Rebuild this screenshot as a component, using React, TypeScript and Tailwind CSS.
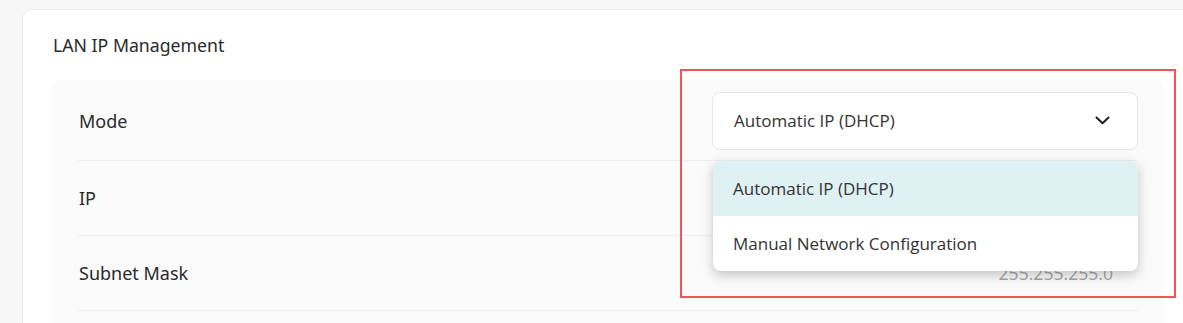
const rows = [
  { label: "Mode", value: null },
  { label: "IP", value: "192.168.1.1" },
  { label: "Subnet Mask", value: "255.255.255.0" },
];

const options = ["Automatic IP (DHCP)", "Manual Network Configuration"];

export default function App() {
  return (
    <div className="relative h-[323px] w-[1183px] overflow-hidden bg-[#f7f7f7] pl-[22px] pt-[9px] font-['Noto_Sans',sans-serif]">
      <section className="h-[440px] w-[1172px] rounded-[10px] border border-[#ececec] bg-white px-[30px] pt-[22px]">
        <h2 className="text-[17.7px] leading-[26px] text-[#2a2a2a]">LAN IP Management</h2>
        <div className="mt-[22px] rounded-[8px] bg-[#fafafa] px-[25px] pb-[40px] pt-[6px]">
          {rows.map((row, i) => (
            <div
              key={row.label}
              className={`flex h-[75px] items-center justify-between border-b border-[#efefef] ${i === 0 ? "pb-[4px]" : ""}`}
            >
              <span className="pl-px text-[18px] text-[#2a2a2a]">{row.label}</span>
              {row.value === null ? (
                <ModeSelect />
              ) : (
                <span className="pr-[25px] font-['Open_Sans',sans-serif] text-[17.6px] text-[#a3a3a3]">
                  {row.value}
                </span>
              )}
            </div>
          ))}
        </div>
      </section>
      {/* annotation box */}
      <div className="pointer-events-none absolute left-[680px] top-[69px] h-[229px] w-[496px] border-2 border-[#f45555]" />
    </div>
  );
}

function ModeSelect() {
  return (
    <div className="relative">
      <button className="flex h-[58px] w-[426px] items-center justify-between rounded-[8px] border border-[#e6e6e6] bg-white pl-[21px] pr-[27px] font-['Open_Sans',sans-serif] text-[17px] text-[#333]">
        <span>{options[0]}</span>
        <svg width="15" height="9" viewBox="0 0 15 9" fill="none" className="mb-px">
          <path d="M1.5 1.5 7.5 7.3 13.5 1.5" stroke="#1f1f1f" strokeWidth="2" strokeLinecap="round" strokeLinejoin="round" />
        </svg>
      </button>
      <ul className="absolute left-px top-[69px] z-10 w-[425px] overflow-hidden rounded-[8px] bg-white font-['Open_Sans',sans-serif] text-[17px] text-[#333] shadow-[0_4px_12px_rgba(0,0,0,0.22)]">
        {options.map((opt, i) => (
          <li
            key={opt}
            className={`flex h-[55px] items-center pl-[20px] ${i === 0 ? "bg-[#dff1f2]" : ""}`}
          >
            {opt}
          </li>
        ))}
      </ul>
    </div>
  );
}
